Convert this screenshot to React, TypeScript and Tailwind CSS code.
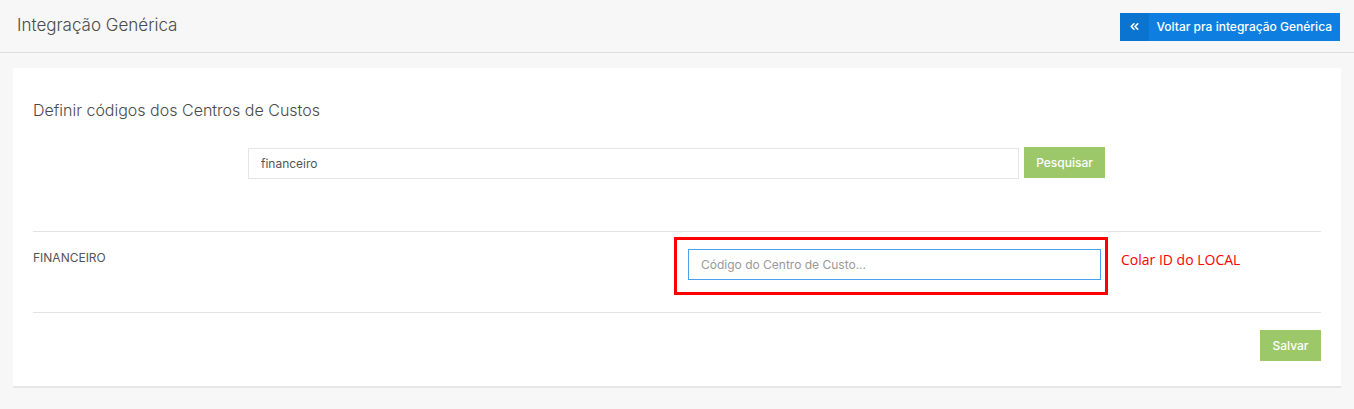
import { ChevronsLeft } from "lucide-react";

export default function App() {
  return (
    <div className="min-h-[409px] bg-[#f7f7f7] font-['Inter',sans-serif] text-[#555]">
      {/* top bar */}
      <header className="flex h-[53px] items-center justify-between border-b border-[#dedede] pl-[17px] pr-[14px]">
        <h1 className="text-[17px] font-light text-[#4a4a4a]">Integração Genérica</h1>
        <button className="mt-[1px] flex h-[28px] items-stretch bg-[#0e7fe1] text-[12px] font-medium text-white">
          <span className="flex w-[29px] items-center justify-center bg-[#0b74d0]">
            <ChevronsLeft size={13} strokeWidth={3} />
          </span>
          <span className="flex items-center pl-[8px] pr-[8px]">Voltar pra integração Genérica</span>
        </button>
      </header>

      <div className="px-[13px] pt-[15px]">
        <section className="border-b-2 border-[#e6e6e6] bg-white px-[20px] pb-[25px] pt-[30px]">
          <h2 className="text-[16px] font-light text-[#4a4a4a]">Definir códigos dos Centros de Custos</h2>

          <div className="mt-[26px] flex justify-center gap-[5px]">
            <input
              defaultValue="financeiro"
              className="-ml-[1px] h-[31px] w-[771px] border border-[#e5e5e5] px-[12px] text-[12px] text-[#555] outline-none"
            />
            <button className="-mt-[1px] h-[31px] w-[81px] bg-[#9dc86a] text-[12px] font-medium text-white">
              Pesquisar
            </button>
          </div>

          <div className="mt-[52px] border-t border-[#e3e3e3]" />

          <div className="grid grid-cols-2 py-[5px]">
            <div className="pt-[12px] text-[12px] text-[#555]">FINANCEIRO</div>
            <div className="-ml-[3px] flex items-start">
              <div className="border-[3px] border-[#ff0000] pb-[12px] pl-[11px] pr-[4px] pt-[9px]">
                <input
                  placeholder="Código do Centro de Custo..."
                  className="h-[31px] w-[413px] border border-[#4aa0f0] px-[12px] text-[12px] text-[#555] placeholder-[#999] outline-none"
                />
              </div>
              <span className="ml-[13px] mt-[12px] font-['Open_Sans',sans-serif] text-[14px] text-[#ff0000]">
                Colar ID do LOCAL
              </span>
            </div>
          </div>

          <div className="mt-[12px] border-t border-[#e3e3e3]" />

          <div className="mt-[17px] flex justify-end">
            <button className="h-[31px] w-[61px] bg-[#9dc86a] text-[12px] font-medium text-white">Salvar</button>
          </div>
        </section>
      </div>
    </div>
  );
}
